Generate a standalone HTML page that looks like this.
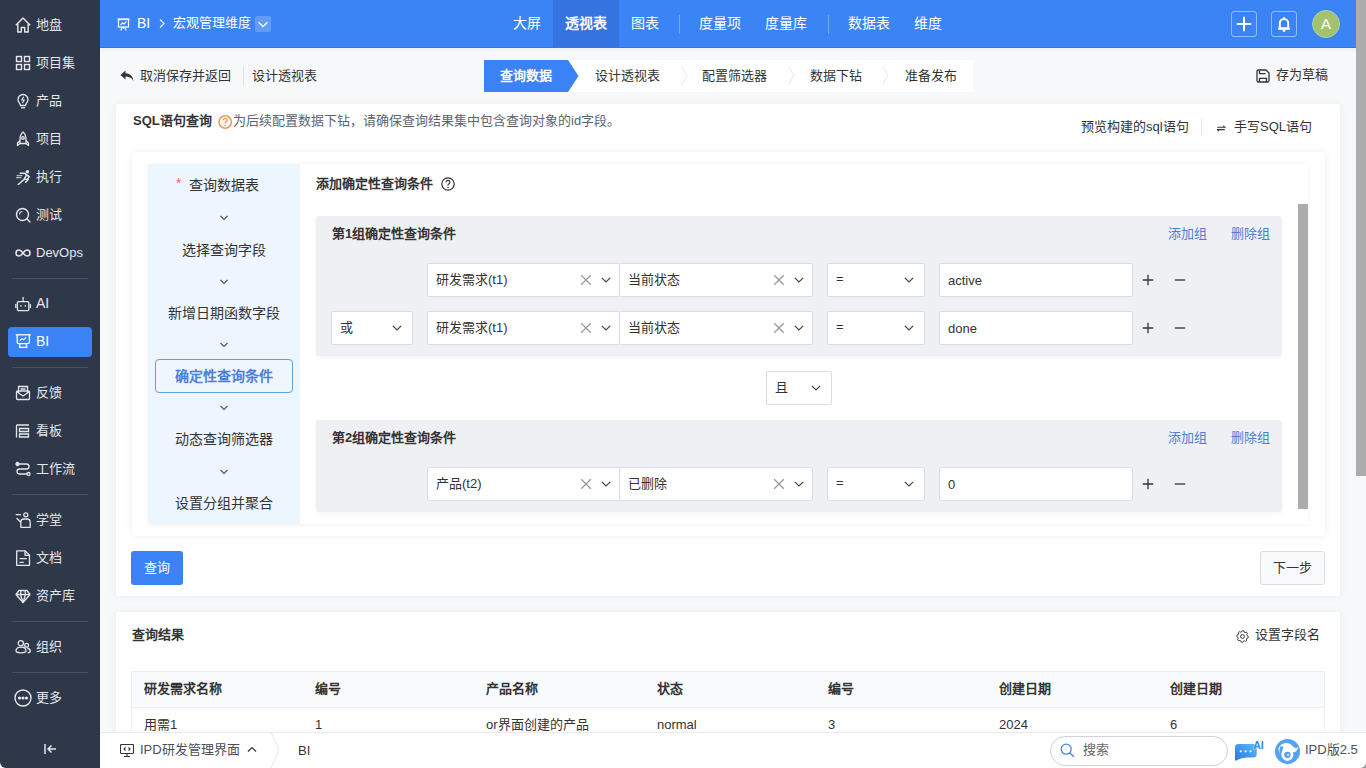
<!DOCTYPE html>
<html lang="zh-CN"><head><meta charset="utf-8">
<style>
*{box-sizing:border-box;margin:0;padding:0}
html,body{width:1366px;height:768px;overflow:hidden;font-family:"Liberation Sans",sans-serif;font-size:13px;color:#333}
body{position:relative;background:#f7f8fa}
.a{position:absolute;white-space:nowrap}
svg{display:block}
#side{position:absolute;left:0;top:0;width:100px;height:768px;background:#2f3849;border-bottom-left-radius:6px}
.si{position:absolute;left:15px;height:20px;width:80px;line-height:20px;color:#e4e7ec;font-size:13px}
.si svg{position:absolute;left:0;top:2px}
.si span{position:absolute;left:21px;top:0}
.sep{position:absolute;left:12px;width:76px;height:1px;background:#455061}
#top{position:absolute;left:100px;top:0;width:1266px;height:48px;background:#3b84f6;border-bottom:1px solid #3574dc;box-shadow:0 2px 5px rgba(0,0,0,0.04)}
.tn{position:absolute;top:0;height:47px;line-height:46px;color:#fff;font-size:14px}
.sel{background:#fff;border:1px solid #d9dce6;border-radius:2px}
.st{position:absolute;left:8px;top:0;line-height:32px;font-size:13px;color:#333}
#scroll{position:absolute;left:1356px;top:0;width:10px;height:476px;background:#acacac}
</style></head><body>
<div id="side">
 <div class="si" style="top:15px"><svg width="16" height="16" viewBox="0 0 16 16" fill="none" stroke="#e4e7ec" stroke-width="1.4" stroke-linejoin="round"><path d="M0.8 8.2L8 1 15.2 8.2M2.8 6.3V15H6.3V10.5H9.7V15H13.2V6.3"/></svg><span>地盘</span></div>
 <div class="si" style="top:53px"><svg width="16" height="16" viewBox="0 0 16 16" fill="none" stroke="#e4e7ec" stroke-width="1.4"><rect x="1.5" y="1.5" width="5" height="5"/><rect x="9.5" y="1.5" width="5" height="5"/><rect x="1.5" y="9.5" width="5" height="5"/><rect x="9.5" y="9.5" width="5" height="5"/></svg><span>项目集</span></div>
 <div class="si" style="top:91px"><svg width="16" height="16" viewBox="0 0 16 16" fill="none" stroke="#e4e7ec" stroke-width="1.3"><path d="M5.5 12.5C5.5 10.5 3 9.5 3 6.5A5 5 0 0 1 13 6.5C13 9.5 10.5 10.5 10.5 12.5Z"/><path d="M6 14.8H10"/><path d="M8.7 3.8L6.8 7H9.2L7.3 10.2" stroke-width="1.1"/></svg><span>产品</span></div>
 <div class="si" style="top:129px"><svg width="16" height="16" viewBox="0 0 16 16" fill="none" stroke="#e4e7ec" stroke-width="1.3" stroke-linejoin="round"><path d="M8 1C5.5 3 5 6 5 8.5V12.5H11V8.5C11 6 10.5 3 8 1Z"/><circle cx="8" cy="7" r="1.3"/><path d="M5 9.5L2.5 12V14.5L5 12.5M11 9.5L13.5 12V14.5L11 12.5"/></svg><span>项目</span></div>
 <div class="si" style="top:167px"><svg width="16" height="16" viewBox="0 0 16 16" fill="none" stroke="#e4e7ec" stroke-width="1.5" stroke-linecap="round" stroke-linejoin="round"><circle cx="12.4" cy="2.8" r="1.8" fill="#e4e7ec" stroke="none"/><path d="M5.2 4.3H9.8L11.6 5.8 9.2 10.2 3.3 15.5"/><path d="M9.4 10.2L13.2 10.4 10.6 13.2"/><path d="M11.8 6L14.3 7.6 12.8 9.6"/><path d="M2 6.6H7M1.5 8.7H6" stroke="#b8bcc6" stroke-width="1.2"/></svg><span>执行</span></div>
 <div class="si" style="top:205px"><svg width="16" height="16" viewBox="0 0 16 16" fill="none" stroke="#e4e7ec" stroke-width="1.4" stroke-linecap="round"><circle cx="7.5" cy="7.5" r="6"/><path d="M11.8 11.8L15 15"/><path d="M4.5 7A3 3 0 0 1 7 4.5" stroke-width="1.1"/></svg><span>测试</span></div>
 <div class="si" style="top:243px"><svg width="16" height="16" viewBox="0 0 16 16" fill="none" stroke="#e4e7ec" stroke-width="1.5"><path d="M8 8C6.5 6 5.5 5 4 5A3 3 0 0 0 4 11C5.5 11 6.5 10 8 8C9.5 6 10.5 5 12 5A3 3 0 0 1 12 11C10.5 11 9.5 10 8 8Z"/></svg><span>DevOps</span></div>
 <div class="sep" style="top:278px"></div>
 <div class="si" style="top:294px"><svg width="16" height="16" viewBox="0 0 16 16" fill="none" stroke="#e4e7ec" stroke-width="1.3"><rect x="2.4" y="5.6" width="11.4" height="9" rx="1"/><path d="M8.1 1V5.6M0.8 8V12M15.4 8V12"/><circle cx="5.9" cy="9.9" r=".8" fill="#e4e7ec" stroke="none"/><circle cx="10.3" cy="9.9" r=".8" fill="#e4e7ec" stroke="none"/></svg><span style="font-size:14px;top:-1px">AI</span></div>
 <div class="a" style="left:8px;top:327px;width:84px;height:30px;background:#3b82f6;border-radius:4px"></div>
 <div class="si" style="top:332px;color:#fff"><svg width="16" height="16" viewBox="0 0 16 16" fill="none" stroke="#fff" stroke-width="1.3" stroke-linejoin="round"><path d="M0.7 0.8H15.8"/><path d="M2.2 0.8V8Q2.2 9.6 3.8 9.6H12.8Q14.4 9.6 14.4 8V0.8"/><path d="M4.8 6.6L7 4.6 8.6 5.8 11.2 3.4" stroke-width="1.1"/><path d="M5 9.6L4.5 13.4H11.8L11.2 9.6"/></svg><span style="font-size:14px;top:-1px">BI</span></div>
 <div class="sep" style="top:367px"></div>
 <div class="si" style="top:383px"><svg width="16" height="16" viewBox="0 0 16 16" fill="none" stroke="#e4e7ec" stroke-width="1.3"><rect x="1.5" y="6" width="13" height="8.5" rx="1"/><path d="M1.5 6.5L8 11 14.5 6.5M3.5 7.5V1.5H12.5V7.5M5.5 4H10.5"/></svg><span>反馈</span></div>
 <div class="si" style="top:421px"><svg width="16" height="16" viewBox="0 0 16 16" fill="none" stroke="#e4e7ec" stroke-width="1.3"><path d="M1.5 2H14M1.5 2V14.5M4.5 5.5H13.5V8.5H4.5ZM4.5 11H13.5V14H4.5Z"/></svg><span>看板</span></div>
 <div class="si" style="top:459px"><svg width="16" height="16" viewBox="0 0 16 16" fill="none" stroke="#e4e7ec" stroke-width="1.3"><circle cx="2.5" cy="3" r="1.5" fill="#e4e7ec"/><circle cx="13.5" cy="13" r="1.5"/><path d="M4 3H11.5A2.5 2.5 0 0 1 11.5 8H4.5A2.5 2.5 0 0 0 4.5 13H12"/></svg><span>工作流</span></div>
 <div class="sep" style="top:494px"></div>
 <div class="si" style="top:510px"><svg width="16" height="16" viewBox="0 0 16 16" fill="none" stroke="#e4e7ec" stroke-width="1.3" stroke-linejoin="round" stroke-linecap="round"><circle cx="10.8" cy="2.8" r="2"/><path d="M1.2 2.6H5.5M5.8 15.3V10.3Q5.8 7 8.8 7H12.2Q15.2 7 15.2 10.3V15.3ZM6 10.5L2 6.5"/></svg><span>学堂</span></div>
 <div class="si" style="top:548px"><svg width="16" height="16" viewBox="0 0 16 16" fill="none" stroke="#e4e7ec" stroke-width="1.3" stroke-linejoin="round"><path d="M1.7 0.8H10L14.5 5.3V15.3H1.7Z"/><path d="M10 0.8V5.3H14.5M4.6 8.6H11.8M4.6 12.3H8.7"/></svg><span>文档</span></div>
 <div class="si" style="top:586px"><svg width="16" height="16" viewBox="0 0 16 16" fill="none" stroke="#e4e7ec" stroke-width="1.3" stroke-linejoin="round"><path d="M4 2.5H12L15 6.5 8 14.5 1 6.5Z"/><path d="M1 6.5H15M6 2.5L5.5 6.5 8 14.5 10.5 6.5 10 2.5"/></svg><span>资产库</span></div>
 <div class="sep" style="top:621px"></div>
 <div class="si" style="top:637px"><svg width="16" height="16" viewBox="0 0 16 16" fill="none" stroke="#e4e7ec" stroke-width="1.3"><circle cx="5.8" cy="4.2" r="2.6"/><path d="M1 11.8C1 9.5 3 8.2 6 8.2S11 9.5 11 11.8C11 13.3 9.5 13.8 6 13.8S1 13.3 1 11.8Z"/><circle cx="11.6" cy="6.2" r="1.9"/><path d="M12.3 9.3C14.2 9.5 15.3 10.7 15.3 12S14.3 13.8 12.6 13.8"/></svg><span>组织</span></div>
 <div class="sep" style="top:672px"></div>
 <div class="si" style="top:688px"><svg width="18" height="18" viewBox="0 0 18 18" fill="none" stroke="#e4e7ec" stroke-width="1.4" style="left:-1px;top:1px"><circle cx="9" cy="9" r="8"/><circle cx="5.5" cy="9" r=".9" fill="#e4e7ec"/><circle cx="9" cy="9" r=".9" fill="#e4e7ec"/><circle cx="12.5" cy="9" r=".9" fill="#e4e7ec"/></svg><span>更多</span></div>
 <div class="a" style="left:44px;top:743px"><svg width="13" height="12" viewBox="0 0 13 12" fill="none" stroke="#e4e7ec" stroke-width="1.5"><path d="M1 1V11M12 6H4M7.5 2.5L4 6 7.5 9.5"/></svg></div>
</div>
<div id="top">
 <div class="a" style="left:17px;top:18px"><svg width="13" height="13" viewBox="0 0 13 13" fill="none" stroke="#fff" stroke-width="1.2"><path d="M0.5 1H12.5"/><rect x="1.5" y="1.5" width="10" height="7.5"/><path d="M3.5 7L5.5 5 7 6 9.5 3.5"/><path d="M6.5 9V11M4 12.5L5 9M9 12.5L8 9"/></svg></div>
 <div class="a" style="left:37px;top:0;line-height:46px;color:#fff;font-size:14px">BI</div>
 <div class="a" style="left:58px;top:18px"><svg width="8" height="11" viewBox="0 0 8 11" fill="none" stroke="#dce8fd" stroke-width="1.3"><path d="M2 1.5L6 5.5 2 9.5"/></svg></div>
 <div class="a" style="left:73px;top:0;line-height:46px;color:#fff;font-size:13px">宏观管理维度</div>
 <div class="a" style="left:155px;top:16px;width:16px;height:16px;background:rgba(255,255,255,0.2);border-radius:2px"><svg width="16" height="16" viewBox="0 0 16 16" fill="none" stroke="#fff" stroke-width="1.3"><path d="M3.7 6.3L8 10.6 12.3 6.3"/></svg></div>
 <div class="a" style="left:453px;top:0;width:66px;height:47px;background:#3574de"></div>
 <div class="tn" style="left:413px">大屏</div>
 <div class="tn" style="left:465px;font-weight:bold">透视表</div>
 <div class="tn" style="left:531px">图表</div>
 <div class="a" style="left:579px;top:15px;width:1px;height:19px;background:rgba(255,255,255,0.3)"></div>
 <div class="tn" style="left:599px">度量项</div>
 <div class="tn" style="left:665px">度量库</div>
 <div class="a" style="left:728px;top:15px;width:1px;height:19px;background:rgba(255,255,255,0.3)"></div>
 <div class="tn" style="left:748px">数据表</div>
 <div class="tn" style="left:814px">维度</div>
 <div class="a" style="left:1131px;top:11px;width:26px;height:26px;border:1px solid rgba(255,255,255,0.45);border-radius:3px"><svg width="24" height="24" viewBox="0 0 24 24" fill="none" stroke="#fff" stroke-width="2"><path d="M12 4.8V19.2M4.8 12H19.2"/></svg></div>
 <div class="a" style="left:1171px;top:11px;width:26px;height:26px;border:1px solid rgba(255,255,255,0.45);border-radius:3px"><svg width="24" height="24" viewBox="0 0 24 24" fill="none" stroke="#fff" stroke-width="2" stroke-linejoin="round"><path d="M7.8 16.3V11.2A4.2 4.2 0 0 1 16.2 11.2V16.3Z"/><path d="M6.2 16.8H17.8" stroke-width="2"/><path d="M12 5.2V6.8M10.8 18.8H13.2"/></svg></div>
 <div class="a" style="left:1212px;top:10px;width:28px;height:28px;border-radius:50%;background:#a4c26e;border:1px solid #a9d0b0;color:#fff;font-size:15px;line-height:25px;text-align:center">A</div>
</div>

<div id="tb">
 <div class="a" style="left:120px;top:70px"><svg width="14" height="12" viewBox="0 0 14 12" fill="#333"><path d="M5.5 0.5L0.5 5 5.5 9.5V6.5C9 6.5 11.5 7.5 13.5 11 13 6.5 10.5 3.5 5.5 3.2Z"/></svg></div>
 <div class="a" style="left:140px;top:66px;line-height:20px;font-size:13px;color:#333">取消保存并返回</div>
 <div class="a" style="left:243px;top:66px;width:1px;height:20px;background:#dcdfe6"></div>
 <div class="a" style="left:252px;top:66px;line-height:20px;font-size:13px;color:#333">设计透视表</div>
 <div class="a" style="left:484px;top:60px;width:489px;height:32px;background:#fff"></div>
 <svg class="a" style="left:484px;top:60px" width="96" height="32" viewBox="0 0 96 32"><path d="M0 0H84L94.5 16 84 32H0Z" fill="#3b82f6"/></svg>
 <div class="a" style="left:500px;top:66px;line-height:20px;font-size:13px;color:#fff;font-weight:bold">查询数据</div>
 <div class="a" style="left:595px;top:66px;line-height:20px;font-size:13px;color:#333">设计透视表</div>
 <svg class="a" style="left:681px;top:66px" width="7" height="19" viewBox="0 0 7 19" fill="none" stroke="#e6e8ec"><path d="M0.8 0.5L5.8 9.5 0.8 18.5"/></svg>
 <div class="a" style="left:702px;top:66px;line-height:20px;font-size:13px;color:#333">配置筛选器</div>
 <svg class="a" style="left:788px;top:66px" width="7" height="19" viewBox="0 0 7 19" fill="none" stroke="#e6e8ec"><path d="M0.8 0.5L5.8 9.5 0.8 18.5"/></svg>
 <div class="a" style="left:810px;top:66px;line-height:20px;font-size:13px;color:#333">数据下钻</div>
 <svg class="a" style="left:882px;top:66px" width="7" height="19" viewBox="0 0 7 19" fill="none" stroke="#e6e8ec"><path d="M0.8 0.5L5.8 9.5 0.8 18.5"/></svg>
 <div class="a" style="left:905px;top:66px;line-height:20px;font-size:13px;color:#333">准备发布</div>
 <div class="a" style="left:1256px;top:69px"><svg width="14" height="14" viewBox="0 0 14 14" fill="none" stroke="#2d3340" stroke-width="1.3" stroke-linejoin="round"><path d="M1 2.5A1.5 1.5 0 0 1 2.5 1H10L13 4V11.5A1.5 1.5 0 0 1 11.5 13H2.5A1.5 1.5 0 0 1 1 11.5Z"/><path d="M3.5 1.5V4.6H9.5M3.5 13V9.3H10.5V13"/></svg></div>
 <div class="a" style="left:1276px;top:65px;line-height:20px;font-size:13px;color:#333">存为草稿</div>
</div>
<div id="card1" class="a" style="left:116px;top:104px;width:1224px;height:492px;background:#fff;border-radius:2px;box-shadow:0 0 8px rgba(0,10,40,0.05)"></div>
<div class="a" style="left:133px;top:111px;line-height:20px;font-size:13px;color:#333;font-weight:bold">SQL语句查询</div>
<svg class="a" style="left:218px;top:115px" width="15" height="14" viewBox="0 0 15 14" fill="none" stroke="#ea965a" stroke-width="1.5"><circle cx="7.2" cy="7" r="6.2"/><path d="M5.2 5.3Q5.2 3.3 7.2 3.3T9.2 5.2Q9.2 6.3 7.8 7Q7.2 7.4 7.2 8.6" stroke-width="1.3"/><circle cx="7.2" cy="10.5" r=".8" fill="#ea965a" stroke="none"/></svg>
<div class="a" style="left:233px;top:111px;line-height:20px;font-size:13px;color:#5c6470">为后续配置数据下钻，请确保查询结果集中包含查询对象的id字段。</div>
<div class="a" style="left:1081px;top:117px;line-height:20px;font-size:13px;color:#333">预览构建的sql语句</div>
<div class="a" style="left:1201px;top:119px;width:1px;height:16px;background:#e4e6ea"></div>
<div class="a" style="left:1217px;top:124px"><svg width="9" height="9" viewBox="0 0 9 9" fill="none" stroke="#333" stroke-width="1.1"><path d="M0.3 3.2H7.8L6.3 1.8M7.8 5.6H0.3L1.8 7"/></svg></div>
<div class="a" style="left:1234px;top:117px;line-height:20px;font-size:13px;color:#333">手写SQL语句</div>
<div id="card2" class="a" style="left:132px;top:152px;width:1193px;height:384px;background:#fff;border-radius:4px;box-shadow:0 0 8px rgba(0,0,0,0.07)"></div>
<div class="a" style="left:148px;top:164px;width:1160px;height:360px;background:#fff;box-shadow:0 1px 6px rgba(0,0,0,0.05)"></div>
<div class="a" style="left:148px;top:164px;width:152px;height:360px;background:#edf5fe"></div>
<div class="a" style="left:148px;width:152px;text-align:center;top:175px;line-height:20px;font-size:14px;color:#333">查询数据表</div><div class="a" style="left:176px;top:176px;line-height:14px;font-size:14px;color:#f56c6c">*</div>
<div class="a" style="left:148px;width:152px;text-align:center;top:240px;line-height:20px;font-size:14px;color:#333">选择查询字段</div>
<div class="a" style="left:148px;width:152px;text-align:center;top:303px;line-height:20px;font-size:14px;color:#333">新增日期函数字段</div>
<div class="a" style="left:155px;top:359px;width:138px;height:34px;border:1px solid #64a3da;border-radius:4px;background:#f0f6fe"></div>
<div class="a" style="left:148px;width:152px;text-align:center;top:366px;line-height:20px;font-size:14px;color:#4a80dc;font-weight:bold">确定性查询条件</div>
<div class="a" style="left:148px;width:152px;text-align:center;top:429px;line-height:20px;font-size:14px;color:#333">动态查询筛选器</div>
<div class="a" style="left:148px;width:152px;text-align:center;top:493px;line-height:20px;font-size:14px;color:#333">设置分组并聚合</div>
<svg class="a" style="left:219px;top:214px" width="10" height="8" viewBox="0 0 10 8" fill="none" stroke="#555" stroke-width="1.2"><path d="M1.5 2L5 5.5 8.5 2"/></svg>
<svg class="a" style="left:219px;top:278px" width="10" height="8" viewBox="0 0 10 8" fill="none" stroke="#555" stroke-width="1.2"><path d="M1.5 2L5 5.5 8.5 2"/></svg>
<svg class="a" style="left:219px;top:341px" width="10" height="8" viewBox="0 0 10 8" fill="none" stroke="#555" stroke-width="1.2"><path d="M1.5 2L5 5.5 8.5 2"/></svg>
<svg class="a" style="left:219px;top:404px" width="10" height="8" viewBox="0 0 10 8" fill="none" stroke="#555" stroke-width="1.2"><path d="M1.5 2L5 5.5 8.5 2"/></svg>
<svg class="a" style="left:219px;top:468px" width="10" height="8" viewBox="0 0 10 8" fill="none" stroke="#555" stroke-width="1.2"><path d="M1.5 2L5 5.5 8.5 2"/></svg>
<div class="a" style="left:316px;top:174px;line-height:20px;font-size:13px;color:#333;font-weight:bold">添加确定性查询条件</div>
<svg class="a" style="left:441px;top:177px" width="15" height="14" viewBox="0 0 15 14" fill="none" stroke="#333" stroke-width="1.2"><circle cx="7" cy="7" r="6.2"/><path d="M5.2 5.3Q5.2 3.3 7 3.3T8.9 5.2Q8.9 6.3 7.6 7Q7 7.4 7 8.6" stroke-width="1.2"/><circle cx="7" cy="10.5" r=".75" fill="#333" stroke="none"/></svg>
<div class="a" style="left:316px;top:216px;width:966px;height:140px;background:#eff0f3;border-radius:3px;box-shadow:0 2px 6px rgba(0,0,0,0.04)"></div>
<div class="a" style="left:332px;top:224px;line-height:20px;font-size:13px;color:#333;font-weight:bold">第1组确定性查询条件</div>
<div class="a" style="left:1168px;top:224px;line-height:20px;font-size:13px;color:#4a7fd8">添加组</div><div class="a" style="left:1231px;top:224px;line-height:20px;font-size:13px;color:#4a7fd8">删除组</div>
<div class="a sel" style="left:427px;top:263px;width:193px;height:34px"><span class="st">研发需求(t1)</span><svg class="a" style="left:152px;top:10px" width="12" height="12" viewBox="0 0 12 12" fill="none" stroke="#9a9a9a" stroke-width="1.3"><path d="M1.2 1.2L10.8 10.8M10.8 1.2L1.2 10.8"/></svg><svg class="a" style="left:172px;top:12px" width="12" height="8" viewBox="0 0 12 8" fill="none" stroke="#444" stroke-width="1.2"><path d="M1.8 1.8L6 6 10.2 1.8"/></svg></div>
<div class="a sel" style="left:619px;top:263px;width:194px;height:34px"><span class="st">当前状态</span><svg class="a" style="left:153px;top:10px" width="12" height="12" viewBox="0 0 12 12" fill="none" stroke="#9a9a9a" stroke-width="1.3"><path d="M1.2 1.2L10.8 10.8M10.8 1.2L1.2 10.8"/></svg><svg class="a" style="left:173px;top:12px" width="12" height="8" viewBox="0 0 12 8" fill="none" stroke="#444" stroke-width="1.2"><path d="M1.8 1.8L6 6 10.2 1.8"/></svg></div>
<div class="a sel" style="left:827px;top:263px;width:98px;height:34px"><span class="st" style="top:-1px">=</span><svg class="a" style="left:75px;top:12px" width="12" height="8" viewBox="0 0 12 8" fill="none" stroke="#444" stroke-width="1.2"><path d="M1.8 1.8L6 6 10.2 1.8"/></svg></div>
<div class="a sel" style="left:939px;top:263px;width:194px;height:34px"><span class="st" style="top:1px">active</span></div>
<svg class="a" style="left:1142px;top:274px" width="12" height="12" viewBox="0 0 12 12" fill="none" stroke="#333" stroke-width="1.3"><path d="M6 0.8V11.2M0.8 6H11.2"/></svg><svg class="a" style="left:1174px;top:274px" width="12" height="12" viewBox="0 0 12 12" fill="none" stroke="#333" stroke-width="1.3"><path d="M0.8 6H11.2"/></svg>
<div class="a sel" style="left:331px;top:311px;width:82px;height:34px"><span class="st">或</span><svg class="a" style="left:59px;top:12px" width="12" height="8" viewBox="0 0 12 8" fill="none" stroke="#444" stroke-width="1.2"><path d="M1.8 1.8L6 6 10.2 1.8"/></svg></div>
<div class="a sel" style="left:427px;top:311px;width:193px;height:34px"><span class="st">研发需求(t1)</span><svg class="a" style="left:152px;top:10px" width="12" height="12" viewBox="0 0 12 12" fill="none" stroke="#9a9a9a" stroke-width="1.3"><path d="M1.2 1.2L10.8 10.8M10.8 1.2L1.2 10.8"/></svg><svg class="a" style="left:172px;top:12px" width="12" height="8" viewBox="0 0 12 8" fill="none" stroke="#444" stroke-width="1.2"><path d="M1.8 1.8L6 6 10.2 1.8"/></svg></div>
<div class="a sel" style="left:619px;top:311px;width:194px;height:34px"><span class="st">当前状态</span><svg class="a" style="left:153px;top:10px" width="12" height="12" viewBox="0 0 12 12" fill="none" stroke="#9a9a9a" stroke-width="1.3"><path d="M1.2 1.2L10.8 10.8M10.8 1.2L1.2 10.8"/></svg><svg class="a" style="left:173px;top:12px" width="12" height="8" viewBox="0 0 12 8" fill="none" stroke="#444" stroke-width="1.2"><path d="M1.8 1.8L6 6 10.2 1.8"/></svg></div>
<div class="a sel" style="left:827px;top:311px;width:98px;height:34px"><span class="st" style="top:-1px">=</span><svg class="a" style="left:75px;top:12px" width="12" height="8" viewBox="0 0 12 8" fill="none" stroke="#444" stroke-width="1.2"><path d="M1.8 1.8L6 6 10.2 1.8"/></svg></div>
<div class="a sel" style="left:939px;top:311px;width:194px;height:34px"><span class="st" style="top:1px">done</span></div>
<svg class="a" style="left:1142px;top:322px" width="12" height="12" viewBox="0 0 12 12" fill="none" stroke="#333" stroke-width="1.3"><path d="M6 0.8V11.2M0.8 6H11.2"/></svg><svg class="a" style="left:1174px;top:322px" width="12" height="12" viewBox="0 0 12 12" fill="none" stroke="#333" stroke-width="1.3"><path d="M0.8 6H11.2"/></svg>
<div class="a sel" style="left:766px;top:371px;width:66px;height:34px"><span class="st">且</span><svg class="a" style="left:43px;top:12px" width="12" height="8" viewBox="0 0 12 8" fill="none" stroke="#444" stroke-width="1.2"><path d="M1.8 1.8L6 6 10.2 1.8"/></svg></div>
<div class="a" style="left:316px;top:420px;width:966px;height:92px;background:#eff0f3;border-radius:3px;box-shadow:0 2px 6px rgba(0,0,0,0.04)"></div>
<div class="a" style="left:332px;top:428px;line-height:20px;font-size:13px;color:#333;font-weight:bold">第2组确定性查询条件</div>
<div class="a" style="left:1168px;top:428px;line-height:20px;font-size:13px;color:#4a7fd8">添加组</div><div class="a" style="left:1231px;top:428px;line-height:20px;font-size:13px;color:#4a7fd8">删除组</div>
<div class="a sel" style="left:427px;top:467px;width:193px;height:34px"><span class="st">产品(t2)</span><svg class="a" style="left:152px;top:10px" width="12" height="12" viewBox="0 0 12 12" fill="none" stroke="#9a9a9a" stroke-width="1.3"><path d="M1.2 1.2L10.8 10.8M10.8 1.2L1.2 10.8"/></svg><svg class="a" style="left:172px;top:12px" width="12" height="8" viewBox="0 0 12 8" fill="none" stroke="#444" stroke-width="1.2"><path d="M1.8 1.8L6 6 10.2 1.8"/></svg></div>
<div class="a sel" style="left:619px;top:467px;width:194px;height:34px"><span class="st">已删除</span><svg class="a" style="left:153px;top:10px" width="12" height="12" viewBox="0 0 12 12" fill="none" stroke="#9a9a9a" stroke-width="1.3"><path d="M1.2 1.2L10.8 10.8M10.8 1.2L1.2 10.8"/></svg><svg class="a" style="left:173px;top:12px" width="12" height="8" viewBox="0 0 12 8" fill="none" stroke="#444" stroke-width="1.2"><path d="M1.8 1.8L6 6 10.2 1.8"/></svg></div>
<div class="a sel" style="left:827px;top:467px;width:98px;height:34px"><span class="st" style="top:-1px">=</span><svg class="a" style="left:75px;top:12px" width="12" height="8" viewBox="0 0 12 8" fill="none" stroke="#444" stroke-width="1.2"><path d="M1.8 1.8L6 6 10.2 1.8"/></svg></div>
<div class="a sel" style="left:939px;top:467px;width:194px;height:34px"><span class="st" style="top:1px">0</span></div>
<svg class="a" style="left:1142px;top:478px" width="12" height="12" viewBox="0 0 12 12" fill="none" stroke="#333" stroke-width="1.3"><path d="M6 0.8V11.2M0.8 6H11.2"/></svg><svg class="a" style="left:1174px;top:478px" width="12" height="12" viewBox="0 0 12 12" fill="none" stroke="#333" stroke-width="1.3"><path d="M0.8 6H11.2"/></svg>
<div class="a" style="left:1298px;top:204px;width:10px;height:305px;background:#acacac"></div>
<div class="a" style="left:131px;top:551px;width:52px;height:34px;background:#3b82f6;border-radius:3px;color:#fff;font-size:13px;line-height:34px;text-align:center">查询</div>
<div class="a" style="left:1260px;top:551px;width:65px;height:34px;background:#f9fafc;border:1px solid #d9dce6;border-radius:3px;color:#333;font-size:13px;line-height:32px;text-align:center">下一步</div>
<div class="a" style="left:116px;top:612px;width:1224px;height:160px;background:#fff;border-radius:2px;box-shadow:0 0 8px rgba(0,10,40,0.05)"></div>
<div class="a" style="left:132px;top:625px;line-height:20px;font-size:13px;color:#333;font-weight:bold">查询结果</div>
<div class="a" style="left:1235.5px;top:629.5px"><svg width="13" height="13" viewBox="0 0 13 13" fill="none" stroke="#333" stroke-width="1" stroke-linejoin="round"><path d="M6.50 0.70L7.63 0.81L8.30 2.16L9.11 2.59L10.60 2.40L11.32 3.28L10.84 4.70L11.11 5.58L12.30 6.50L12.19 7.63L10.84 8.30L10.41 9.11L10.60 10.60L9.72 11.32L8.30 10.84L7.42 11.11L6.50 12.30L5.37 12.19L4.70 10.84L3.89 10.41L2.40 10.60L1.68 9.72L2.16 8.30L1.89 7.42L0.70 6.50L0.81 5.37L2.16 4.70L2.59 3.89L2.40 2.40L3.28 1.68L4.70 2.16L5.58 1.89Z"/><circle cx="6.5" cy="6.5" r="1.9"/></svg></div>
<div class="a" style="left:1255px;top:625px;line-height:20px;font-size:13px;color:#333">设置字段名</div>
<div class="a" style="left:131px;top:671px;width:1194px;height:80px;border:1px solid #ebeef5;border-bottom:none"></div>
<div class="a" style="left:132px;top:672px;width:1192px;height:36px;background:#f9fafc;border-bottom:1px solid #ebeef5"></div>
<div class="a" style="left:144px;top:679px;line-height:20px;font-size:13px;color:#333;font-weight:bold">研发需求名称</div>
<div class="a" style="left:144px;top:715px;line-height:20px;font-size:13px;color:#333">用需1</div>
<div class="a" style="left:315px;top:679px;line-height:20px;font-size:13px;color:#333;font-weight:bold">编号</div>
<div class="a" style="left:315px;top:715px;line-height:20px;font-size:13px;color:#333">1</div>
<div class="a" style="left:486px;top:679px;line-height:20px;font-size:13px;color:#333;font-weight:bold">产品名称</div>
<div class="a" style="left:486px;top:715px;line-height:20px;font-size:13px;color:#333">or界面创建的产品</div>
<div class="a" style="left:657px;top:679px;line-height:20px;font-size:13px;color:#333;font-weight:bold">状态</div>
<div class="a" style="left:657px;top:715px;line-height:20px;font-size:13px;color:#333">normal</div>
<div class="a" style="left:828px;top:679px;line-height:20px;font-size:13px;color:#333;font-weight:bold">编号</div>
<div class="a" style="left:828px;top:715px;line-height:20px;font-size:13px;color:#333">3</div>
<div class="a" style="left:999px;top:679px;line-height:20px;font-size:13px;color:#333;font-weight:bold">创建日期</div>
<div class="a" style="left:999px;top:715px;line-height:20px;font-size:13px;color:#333">2024</div>
<div class="a" style="left:1170px;top:679px;line-height:20px;font-size:13px;color:#333;font-weight:bold">创建日期</div>
<div class="a" style="left:1170px;top:715px;line-height:20px;font-size:13px;color:#333">6</div>
<div class="a" style="left:1350px;top:752px;width:16px;height:16px;background:#9a9a9a"></div><div id="bb" class="a" style="left:100px;top:732px;width:1266px;height:36px;background:#fff;border-top:1px solid #e8eaed;border-bottom-right-radius:6px"></div>
<div class="a" style="left:120px;top:744px"><svg width="14" height="13" viewBox="0 0 14 13" fill="none" stroke="#333" stroke-width="1.1"><rect x="0.5" y="0.5" width="13" height="9" rx="1"/><path d="M7 9.5V12M4 12.5H10M5.5 3.5L4 5 5.5 6.5M8.5 3.5L10 5 8.5 6.5"/></svg></div>
<div class="a" style="left:140px;top:740px;line-height:20px;font-size:13px;color:#4a4f5a">IPD研发管理界面</div>
<svg class="a" style="left:247px;top:746px" width="10" height="7" viewBox="0 0 10 7" fill="none" stroke="#333" stroke-width="1.2"><path d="M1 5.5L5 1.5 9 5.5"/></svg>
<svg class="a" style="left:270px;top:732px" width="10" height="36" viewBox="0 0 10 36" fill="none" stroke="#e4e6ea"><path d="M1 0L9 18 1 36"/></svg>
<div class="a" style="left:298px;top:741px;line-height:20px;font-size:13px;color:#333">BI</div>
<div class="a" style="left:1050px;top:736px;width:178px;height:30px;border:1px solid #cdd1e0;border-radius:15px"></div>
<svg class="a" style="left:1060px;top:743px" width="15" height="15" viewBox="0 0 15 15" fill="none" stroke="#4a86d8" stroke-width="1.3"><circle cx="6.2" cy="6.2" r="5"/><path d="M9.8 9.8L13.8 13.8"/></svg>
<div class="a" style="left:1083px;top:740px;line-height:20px;font-size:13px;color:#666">搜索</div>
<svg class="a" style="left:1230px;top:734px" width="40" height="32" viewBox="0 0 40 32"><defs><linearGradient id="gb" x1="0" y1="1" x2="1" y2="0"><stop offset="0" stop-color="#2779e6"/><stop offset="1" stop-color="#5cb9f6"/></linearGradient></defs><path d="M5 13.5Q5 10 8.5 10H23Q26.7 10 26.7 13.5V20Q26.7 23.5 23 23.5H16Q10 24 6.2 26.6Q5 27.3 5 25.8Z" fill="url(#gb)"/><path d="M22.5 9L27.5 9 27.5 15 21.5 14Z" fill="#fff" opacity="0"/><circle cx="10.8" cy="17.3" r="1.1" fill="#fff"/><circle cx="15.6" cy="17.3" r="1.1" fill="#fff"/><circle cx="20.6" cy="17.3" r="1.1" fill="#fff"/><text x="23.2" y="14.8" font-size="10.5" fill="#3a86e0" font-family="Liberation Sans" font-weight="bold" stroke="#fff" stroke-width="0.6" paint-order="stroke">AI</text></svg>
<svg class="a" style="left:1275px;top:739px" width="25" height="25" viewBox="0 0 24 24"><circle cx="12" cy="12" r="12" fill="#55a1f2"/><path d="M3.2 9.8C4.2 5.2 9.5 2.6 13.8 4.4C16.5 5.6 17.5 8.6 20.2 8.7C21 8.7 21.4 7.9 21.6 6.9C22.4 10.3 20.6 12.4 17.3 12.8L10 12.2 5 15 Z" fill="#fff"/><circle cx="11.9" cy="15.2" r="4.4" fill="none" stroke="#fff" stroke-width="2.8"/><circle cx="12" cy="15.1" r="2.9" fill="#55a1f2"/><circle cx="12.6" cy="15.3" r="1.1" fill="#fff" opacity=".8"/><path d="M5 7.2C6 6.7 7.5 6.9 8 7.6C7.4 9.5 6.6 12.5 5.4 16.2C4.2 13.5 3.9 9.8 5 7.2Z" fill="#55a1f2"/></svg>
<div class="a" style="left:1305px;top:740px;line-height:20px;font-size:13px;color:#4a4f5a">IPD版2.5</div>
<div id="scroll"></div>
</body></html>
